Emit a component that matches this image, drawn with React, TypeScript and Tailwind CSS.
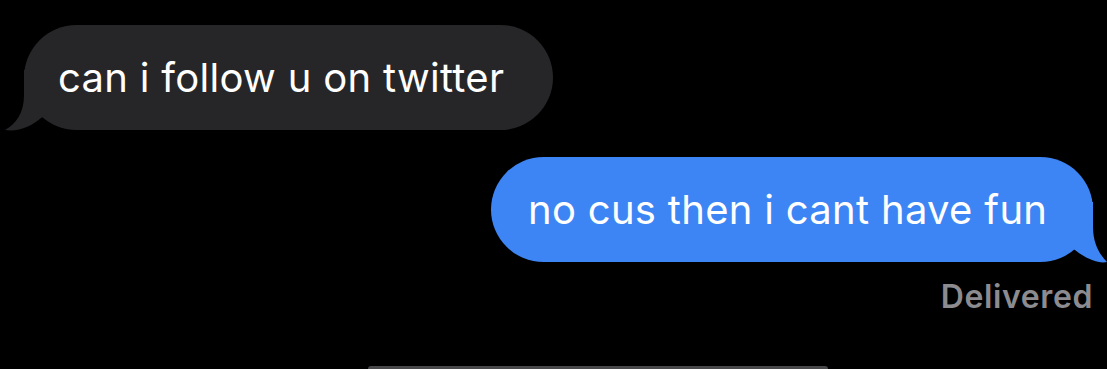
import React from 'react';

const font = { fontFamily: 'Inter, "Noto Sans", sans-serif' };

const Incoming: React.FC<{ text: string }> = ({ text }) => (
  <div className="relative h-[105px] w-[529px] rounded-[53px] bg-[#262628] flex items-center pl-[34px]">
    <svg
      className="absolute left-[-20px] top-0"
      width="60"
      height="106"
      viewBox="-20 0 60 106"
    >
      <path d="M 0 45 L 0 70 C 0 88 -8 99 -19 105 C -5 107 8 101 17 93 L 40 80 L 40 45 Z" fill="#262628" />
    </svg>
    <span className="relative text-white text-[40px] leading-none tracking-[0.3px]">{text}</span>
  </div>
);

const Outgoing: React.FC<{ text: string }> = ({ text }) => (
  <div className="relative h-[105px] w-[602px] rounded-[53px] bg-[#3d85f4] flex items-center pl-[37px]">
    <svg
      className="absolute right-[-20px] top-0"
      width="60"
      height="106"
      viewBox="0 0 60 106"
    >
      <path d="M 40 45 L 40 70 C 40 88 48 99 54 105 C 45 107 32 101 22 93 L 0 80 L 0 45 Z" fill="#3d85f4" />
    </svg>
    <span className="relative text-white text-[40px] leading-none tracking-[0.3px]">{text}</span>
  </div>
);

export default function App() {
  return (
    <div className="w-[1107px] h-[369px] bg-black overflow-hidden flex flex-col" style={font}>
      <div className="pt-[25px] pl-[24px]">
        <Incoming text="can i follow u on twitter" />
      </div>

      <div className="mt-[27px] flex justify-end pr-[14px]">
        <Outgoing text="no cus then i cant have fun" />
      </div>

      <div className="mt-[19px] flex justify-end pr-[14px]">
        <span className="text-[#8b8b90] text-[32px] font-semibold leading-none tracking-[0.6px]">Delivered</span>
      </div>

      <div className="mt-auto ml-[368px] w-[460px] h-[3px] rounded-t-[3px] bg-[#48484a]" />
    </div>
  );
}
